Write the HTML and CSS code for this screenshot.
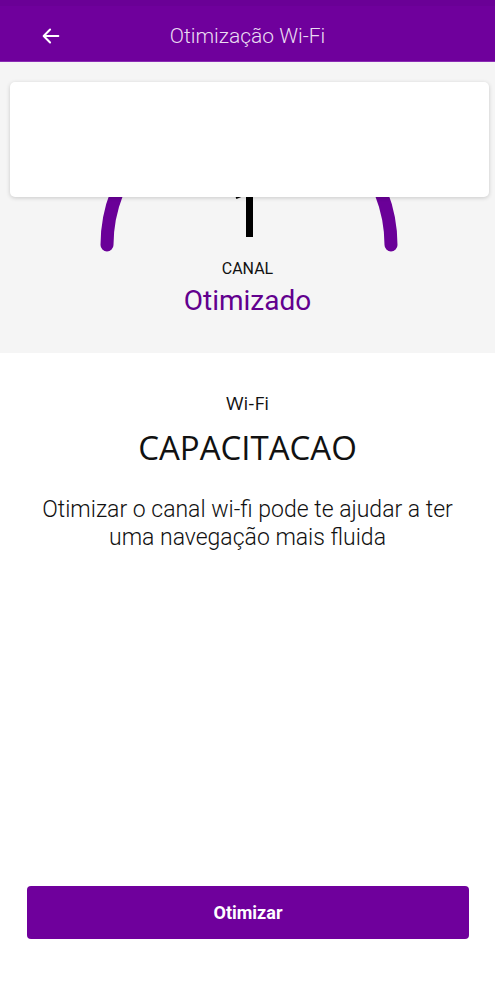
FILE: index.html
```html
<!DOCTYPE html>
<html lang="pt">
<head>
<meta charset="utf-8">
<link rel="stylesheet" href="styles.css">
</head>
<body>
<div class="app">
  <header class="topbar">
    <button class="back" aria-label="Voltar">
      <svg width="22" height="22" viewBox="0 0 24 24"><path d="M20 12H5M11 5l-7 7 7 7" fill="none" stroke="#fff" stroke-width="2.2" stroke-linecap="round" stroke-linejoin="round"/></svg>
    </button>
    <h1 class="title">Otimização Wi-Fi</h1>
  </header>

  <section class="gauge-area">
    <div class="gauge">
      <svg class="gauge-svg" width="495" height="200" viewBox="0 0 495 200">
        <path d="M107 183 A142 142 0 0 1 391 183" fill="none" stroke="#6a0098" stroke-width="13" stroke-linecap="round"/>
        <rect x="246" y="50" width="7" height="125" fill="#000"/>
        <path d="M236 136 L241 134" stroke="#000" stroke-width="2"/>
      </svg>
      <div class="card"></div>
    </div>
    <div class="canal">CANAL</div>
    <div class="status">Otimizado</div>
  </section>

  <section class="info">
    <div class="label">Wi-Fi</div>
    <div class="network">CAPACITACAO</div>
    <p class="desc">Otimizar o canal wi-fi pode te ajudar a ter uma navegação mais fluida</p>
  </section>

  <div class="footer">
    <button class="cta">Otimizar</button>
  </div>
</div>
</body>
</html>
```

FILE: styles.css
```css
* { box-sizing: border-box; }
html, body { margin: 0; padding: 0; background: #fff; }
body { font-family: Roboto, "Noto Sans", sans-serif; width: 495px; height: 1000px; overflow: hidden; }

.app { display: flex; flex-direction: column; height: 1000px; }

.topbar {
  height: 62px;
  background: #6f009c;
  border-bottom: 1px solid #8a2cb4;
  display: flex;
  align-items: center;
  position: relative;
  padding-top: 10px;
  box-shadow: inset 0 6px 0 #6a0096;
}
.back {
  background: none; border: 0; padding: 0;
  width: 24px; height: 24px;
  margin-left: 39px;
  display: flex; align-items: center; justify-content: center;
}
.title {
  position: absolute; left: 0; right: 0; top: 10px; bottom: 0;
  margin: 0;
  display: flex; align-items: center; justify-content: center;
  font-weight: 300; font-size: 21px; color: #eadcf2;
  pointer-events: none;
}

.gauge-area {
  background: #f5f5f5;
  height: 291px;
  display: flex; flex-direction: column; align-items: center;
}
.gauge { position: relative; width: 495px; height: 197px; }
.gauge-svg { position: absolute; left: 0; top: 0; }
.card {
  position: absolute;
  left: 10px; right: 6px; top: 20px; height: 115px;
  background: #fff;
  border-radius: 5px;
  box-shadow: 0 1px 4px rgba(0,0,0,0.18);
}
.canal { font-size: 16px; color: #111; line-height: 20px; }
.status { font-size: 28px; color: #62008e; line-height: 34px; margin-top: 5px; }

.info { display: flex; flex-direction: column; align-items: center; padding-top: 37px; }
.label { font-family: "Open Sans", sans-serif; font-size: 19px; color: #111; line-height: 26px; }
.network { font-family: "Open Sans", sans-serif; font-size: 33px; color: #111; line-height: 44px; margin-top: 10px; }
.desc {
  margin: 26px 36px 0; text-align: center;
  font-size: 23px; font-weight: 300; line-height: 28px; color: #111;
}

.footer { margin-top: auto; padding: 0 26px 61px 27px; }
.cta {
  width: 100%; height: 53px;
  background: #6f009c; color: #fff;
  border: 0; border-radius: 4px;
  font-family: Roboto, sans-serif; font-size: 18px; font-weight: 700;
}
```
